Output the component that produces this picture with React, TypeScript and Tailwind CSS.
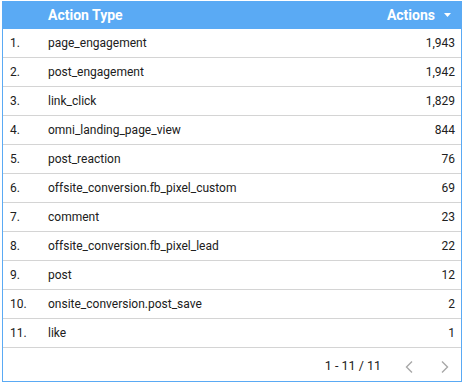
import React from "react";

const rows: [string, string][] = [
  ["page_engagement", "1,943"],
  ["post_engagement", "1,942"],
  ["link_click", "1,829"],
  ["omni_landing_page_view", "844"],
  ["post_reaction", "76"],
  ["offsite_conversion.fb_pixel_custom", "69"],
  ["comment", "23"],
  ["offsite_conversion.fb_pixel_lead", "22"],
  ["post", "12"],
  ["onsite_conversion.post_save", "2"],
  ["like", "1"],
];

export default function App() {
  return (
    <div className="w-[463px] h-[383px] bg-white p-[1px]" style={{ fontFamily: "Roboto, 'Liberation Sans', sans-serif" }}>
      <div className="h-full border border-[#5aaaf4] border-t-0 ml-[1px] w-[460px] flex flex-col">
        <div className="h-[28px] bg-[#5aaaf4] flex items-center text-white font-bold text-[14px] shrink-0">
          <div className="w-[45px]" />
          <div className="flex-1">Action Type</div>
          <div className="flex items-center pr-[10px]">
            <span>Actions</span>
            <svg width="7" height="4" viewBox="0 0 7 4" className="ml-[9px]">
              <path d="M0 0 L7 0 L3.5 4 Z" fill="white" />
            </svg>
          </div>
        </div>
        {rows.map(([name, val], i) => (
          <div key={i} className="h-[29px] flex items-center text-[12px] text-[#202020] border-b border-[#d4d4d4] shrink-0">
            <div className="w-[45px] pl-[7px]">{i + 1}.</div>
            <div className="flex-1">{name}</div>
            <div className="pr-[6px]">{val}</div>
          </div>
        ))}
        <div className="flex-1 flex items-center justify-end text-[12.5px] text-[#202020] pt-[4px]">
          <span className="mr-[24px]">1 - 11 / 11</span>
          <svg width="8" height="12" viewBox="0 0 8 12" className="mr-[28px]">
            <path d="M7 0.5 L1.5 6 L7 11.5" stroke="#a8a8a8" strokeWidth="1.4" fill="none" />
          </svg>
          <svg width="8" height="12" viewBox="0 0 8 12" className="mr-[12px]">
            <path d="M1 0.5 L6.5 6 L1 11.5" stroke="#a8a8a8" strokeWidth="1.4" fill="none" />
          </svg>
        </div>
      </div>
    </div>
  );
}
